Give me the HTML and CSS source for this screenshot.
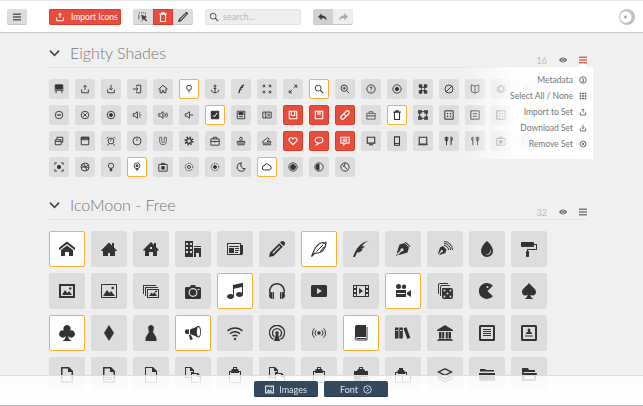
FILE: index.html
```html
<!DOCTYPE html>
<html lang="en">
<head>
  <meta charset="UTF-8">
  <meta name="viewport" content="width=device-width, initial-scale=1.0">
  <title>IcoMoon App</title>
  <link rel="stylesheet" href="styles.css">
</head>
<body>

<svg class="icon-defs" xmlns="http://www.w3.org/2000/svg">
  <!-- toolbar bits -->
  <symbol id="menu-bars" viewBox="0 0 8 8"><path d="M0 .5h8v1.500H0zM0 3.300h8v1.500H0zM0 6.100h8v1.500H0z" fill="currentColor" opacity=".85"/></symbol>
  <symbol id="undo-arrow" viewBox="0 0 16 16"><path d="M6 2L0 7.500 6 13V9.500c4 0 6.500 1.200 8 4.500 0-5-2.500-8.500-8-8.500z"/></symbol>
  <symbol id="chev" viewBox="0 0 12 8"><path d="M1 1.500l5 5 5-5" fill="none" stroke="currentColor" stroke-width="1.800"/></symbol>
  <symbol id="cursor" viewBox="0 0 12 12"><path d="M1 1h8v8" fill="none" stroke="currentColor" stroke-dasharray="1.500 1"/><path d="M1 3v6M3 11h1" fill="none" stroke="currentColor"/><path d="M3.500 3l7.500 3-3 1.200 3 3-1.200 1.200-3-3L5.800 11z" fill="currentColor"/></symbol>
  <symbol id="s-next" viewBox="0 0 12 12"><circle cx="6" cy="6" r="5"/><path d="M5 3.500L7.500 6 5 8.500" stroke-width="1.300"/></symbol>

  <!-- small line icons, 12 grid -->
  <symbol id="s-desk" viewBox="0 0 12 12"><path d="M1.500 1h9v5h-9z" fill="currentColor"/><path d="M.5 7.500h11M2.500 8v3M9.500 8v3"/></symbol>
  <symbol id="s-upload" viewBox="0 0 12 12"><path d="M6 7V1.500M4 3.500l2-2 2 2M2 6.500v4h8v-4"/></symbol>
  <symbol id="s-download" viewBox="0 0 12 12"><path d="M6 1v6M4 5l2 2 2-2M2 6.500v4h8v-4"/></symbol>
  <symbol id="s-login" viewBox="0 0 12 12"><path d="M5.500 3V1.500h5v9h-5V9M1 6h6M5 4l2 2-2 2"/></symbol>
  <symbol id="s-home" viewBox="0 0 12 12"><path d="M.5 6.500l5.500-5 5.500 5M2.500 5.500v5H5V8h2v2.500h2.500v-5"/></symbol>
  <symbol id="s-pin" viewBox="0 0 12 12"><circle cx="6" cy="4.500" r="3"/><path d="M5 8.500h2M5.500 10.500h1"/></symbol>
  <symbol id="s-anchor" viewBox="0 0 12 12"><circle cx="6" cy="2.500" r="1.200"/><path d="M6 4v6.500M1.500 7c0 2.500 2.500 3.500 4.500 3.500s4.500-1 4.500-3.500M4.500 5.500h3"/></symbol>
  <symbol id="s-feather" viewBox="0 0 12 12"><path d="M9.500 1C6.500 2.500 4.500 5.500 3.500 11" stroke-width="1.600"/><path d="M6 3.500l2.500 1M5 6l2 1"/></symbol>
  <symbol id="s-expand" viewBox="0 0 12 12"><path d="M1.500 4V1.500H4M8 1.500h2.500V4M10.500 8v2.500H8M4 10.500H1.500V8M2 2l2 2M10 2L8 4M10 10L8 8M2 10l2-2"/></symbol>
  <symbol id="s-diag" viewBox="0 0 12 12"><path d="M7 5l3-3M7.500 1.500h3v3M5 7l-3 3M4.500 10.500h-3v-3"/></symbol>
  <symbol id="s-search" viewBox="0 0 12 12"><circle cx="5" cy="5" r="3.500"/><path d="M7.500 7.500l3.500 3.500" stroke-width="1.400"/></symbol>
  <symbol id="s-zoom" viewBox="0 0 12 12"><circle cx="5" cy="5" r="3.800"/><path d="M7.500 7.500l3.500 3.500M3.200 5h3.600M5 3.200v3.600"/></symbol>
  <symbol id="s-help" viewBox="0 0 12 12"><circle cx="6" cy="6" r="5"/><path d="M4.700 4.800c0-1.700 2.600-1.700 2.600 0 0 1-1.300 1-1.300 2M6 8v1"/></symbol>
  <symbol id="s-target" viewBox="0 0 12 12"><circle cx="6" cy="6" r="5"/><circle cx="6" cy="6" r="2" fill="currentColor"/></symbol>
  <symbol id="s-command" viewBox="0 0 12 12"><path d="M4 4h4v4H4z"/><path d="M1.500 1h3v3h-3zM7.500 1h3v3h-3zM1.500 8h3v3h-3zM7.500 8h3v3h-3z" fill="currentColor"/></symbol>
  <symbol id="s-no" viewBox="0 0 12 12"><circle cx="6" cy="6" r="4.800"/><path d="M2.500 9.500l7-7" stroke-width="1.200"/></symbol>
  <symbol id="s-book" viewBox="0 0 12 12"><path d="M6 2.500L1.500 1v8L6 11l4.500-2V1zM6 2.500V11"/></symbol>
  <symbol id="s-gear" viewBox="0 0 12 12"><circle cx="6" cy="6" r="3"/><circle cx="6" cy="6" r="4.500" stroke-width="1.500" stroke-dasharray="1.500 1.500"/></symbol>
  <symbol id="s-minus" viewBox="0 0 12 12"><circle cx="6" cy="6" r="4.500"/><path d="M3.500 6h5" stroke-width="1.500"/></symbol>
  <symbol id="s-cross" viewBox="0 0 12 12"><circle cx="6" cy="6" r="4.500"/><path d="M4 4l4 4M8 4l-4 4"/></symbol>
  <symbol id="s-dot" viewBox="0 0 12 12"><circle cx="6" cy="6" r="4.500"/><circle cx="6" cy="6" r="1.800" fill="currentColor"/></symbol>
  <symbol id="s-vol1" viewBox="0 0 12 12"><path d="M1.500 4.500h2L6.500 2v8l-3-2.500h-2zM8.500 4l1.500-1M8.500 6H11M8.500 8l1.500 1"/></symbol>
  <symbol id="s-vol2" viewBox="0 0 12 12"><path d="M1 4.500h2L6 2v8L3 7.500H1z"/><path d="M8 4c1 1 1 3 0 4M10 3c1.500 2 1.500 4 0 6"/></symbol>
  <symbol id="s-vol3" viewBox="0 0 12 12"><path d="M1.500 4.500h2L6.500 2v8l-3-2.500h-2z"/><path d="M6.500 6H11"/></symbol>
  <symbol id="s-check" viewBox="0 0 12 12"><path d="M1.500 1.500h9v9h-9z" fill="currentColor"/><path d="M3.500 6.500l2 1.500 3-4.500" stroke="#fff" stroke-width="1.200"/></symbol>
  <symbol id="s-save" viewBox="0 0 12 12"><path d="M1.500 1.500h9v9h-9z"/><path d="M3.500 3h5v2.500h-5z" fill="currentColor"/><path d="M3.500 8h5"/></symbol>
  <symbol id="s-panel" viewBox="0 0 12 12"><path d="M1 2.500h10v7H1zM4.500 2.500v7"/><path d="M2.500 5H3M6.500 5h3M6.500 7h3"/></symbol>
  <symbol id="s-floppy" viewBox="0 0 12 12"><path d="M1.500 1.500h9v9h-9zM4 1.500v5h4v-5" stroke-width="1.300"/></symbol>
  <symbol id="s-floppy2" viewBox="0 0 12 12"><path d="M1.500 1.500h9v9h-9z" stroke-width="1.300"/><path d="M4 1.500h4v4H4z" fill="currentColor" opacity=".6"/></symbol>
  <symbol id="s-bandage" viewBox="0 0 12 12"><path d="M1.500 7.500L7.500 1.500a2 2 0 0 1 3 3l-6 6a2 2 0 0 1-3-3zM5 5l2 2" stroke-width="1.300"/></symbol>
  <symbol id="s-case" viewBox="0 0 12 12"><path d="M1 4h10v7H1zM4 4V2h4v2" stroke-width="1.200"/><path d="M1 7h10" stroke-width="1.500"/></symbol>
  <symbol id="s-trash" viewBox="0 0 12 12"><path d="M1.500 2.500h9M3 2.500v9h6v-9M4.500 2.500V1h3v1.500" stroke-width="1.300"/></symbol>
  <symbol id="s-blocks" viewBox="0 0 12 12"><path d="M2 2h8v8H2z"/><path d="M0 0h4v4H0zM8 0h4v4H8zM0 8h4v4H0zM8 8h4v4H8z" fill="currentColor" opacity=".75"/></symbol>
  <symbol id="s-dots" viewBox="0 0 12 12"><path d="M1 1h10v10H1z" stroke-width="1.200"/><path d="M3.500 3.500h1.500v1.500H3.500zM7 3.500h1.500v1.500H7zM3.500 7h1.500v1.500H3.500zM7 7h1.500v1.500H7z" fill="currentColor" stroke="none"/></symbol>
  <symbol id="s-lines" viewBox="0 0 12 12"><path d="M1 1h10v10H1z" stroke-width="1.200"/><path d="M3.500 4.500h5M3.500 7.500h5"/></symbol>
  <symbol id="s-layers" viewBox="0 0 12 12"><path d="M1.500 4.500h7v6h-7zM3.500 4.500v-3h7v6h-2M1.500 6.500h7"/></symbol>
  <symbol id="s-window" viewBox="0 0 12 12"><path d="M1.500 1.500h9v9h-9z"/><path d="M1.500 1.500h9v3h-9z" fill="currentColor" opacity=".8"/></symbol>
  <symbol id="s-alarm" viewBox="0 0 12 12"><circle cx="6" cy="6" r="3.500"/><path d="M1 3l2-2M11 3L9 1M3 9.500l-1 2M9 9.500l1 2M6 4v2"/></symbol>
  <symbol id="s-clock" viewBox="0 0 12 12"><circle cx="6" cy="6" r="4.800"/><path d="M6 3v3"/></symbol>
  <symbol id="s-magnet" viewBox="0 0 12 12"><path d="M2 1.500v5a4 4 0 0 0 8 0v-5h-2.500v5a1.500 1.500 0 0 1-3 0v-5z" stroke-width="1.200"/></symbol>
  <symbol id="s-cog" viewBox="0 0 12 12"><circle cx="6" cy="6" r="2.800" stroke-width="1.500"/><circle cx="6" cy="6" r="4.500" stroke-width="2" stroke-dasharray="1.800 1.730"/></symbol>
  <symbol id="s-kit" viewBox="0 0 12 12"><path d="M1 3.500h10v7.500H1zM4 3.500V1.500h4v2"/><path d="M1 6.500h10M6 6v2"/></symbol>
  <symbol id="s-stamp" viewBox="0 0 12 12"><path d="M4.500 6.500c1-1 .3-2.500 0-3.500a1.500 1.500 0 0 1 3 0c-.3 1-1 2.500 0 3.500M1.500 6.500h9v2h-9zM1.500 10.500h9"/></symbol>
  <symbol id="s-stamp2" viewBox="0 0 12 12"><path d="M1 6.500L7 2l2 2-3 2.500h4.500v2H1zM1 10.500h10"/></symbol>
  <symbol id="s-heart" viewBox="0 0 12 12"><path d="M6 10.500L1.500 6C-.2 3.500 3.500.5 6 3.500 8.500.5 12.200 3.500 10.500 6z" stroke-width="1.300"/></symbol>
  <symbol id="s-chat" viewBox="0 0 12 12"><path d="M6.500 1.500c-6 0-7 5.500-2 6.500L3 10.500 7 8.500c5.500-1 4.500-7-.5-7z" stroke-width="1.300"/></symbol>
  <symbol id="s-note" viewBox="0 0 12 12"><path d="M1 1.500h10v7H6.500l-2 2v-2H1z" stroke-width="1.300"/><path d="M3.500 3.500h5v3h-5z" fill="currentColor" opacity=".6"/></symbol>
  <symbol id="s-monitor" viewBox="0 0 12 12"><path d="M1.500 1.500h9v7h-9z" stroke-width="1.300"/><path d="M3.500 10.500h5" stroke-width="1.300"/></symbol>
  <symbol id="s-tablet" viewBox="0 0 12 12"><path d="M3 1h6v10H3z" stroke-width="1.300"/><path d="M3 9h6"/></symbol>
  <symbol id="s-screen" viewBox="0 0 12 12"><path d="M1.500 1.500h9v8h-9z" stroke-width="1.300"/><path d="M.5 10.500h11" stroke-width="1.300"/></symbol>
  <symbol id="s-fork" viewBox="0 0 12 12"><path d="M1.500 1v3.500a1 1 0 0 0 3 0V1M3 1v10M8.500 11V1c2 1 2 4.500 0 5" stroke-width="1.200"/></symbol>
  <symbol id="s-fork2" viewBox="0 0 12 12"><path d="M3.500 11V1c-2 1-2 4.500 0 5M7.500 1v3.500a1 1 0 0 0 3 0V1M9 1v10" stroke-width="1.200"/></symbol>
  <symbol id="s-focus" viewBox="0 0 12 12"><path d="M1 3.500V1h2.500M8.500 1H11v2.500M11 8.500V11H8.500M3.500 11H1V8.500"/><circle cx="6" cy="6" r="2" fill="currentColor"/></symbol>
  <symbol id="s-ball" viewBox="0 0 12 12"><circle cx="6" cy="6" r="4.800"/><path d="M2 3.500c3 3 5.500 3 8-.5M4 1.500c2 2.500 3.500 6 4 9M1.500 7.500C3 6 6.500 5 10.500 7"/></symbol>
  <symbol id="s-bulb" viewBox="0 0 12 12"><circle cx="6" cy="4.500" r="3.200"/><path d="M5 8.500h2v2H5z" fill="currentColor"/></symbol>
  <symbol id="s-bulb2" viewBox="0 0 12 12"><circle cx="6" cy="4.500" r="3.500"/><circle cx="6" cy="4.500" r="1.200" fill="currentColor"/><path d="M4.500 9h3M5.500 10.500h1"/></symbol>
  <symbol id="s-camera" viewBox="0 0 12 12"><path d="M1 3h10v8H1zM4 3V1.500h4V3"/><path d="M4.500 5.500h3v3h-3z" fill="currentColor"/></symbol>
  <symbol id="s-sun" viewBox="0 0 12 12"><circle cx="6" cy="6" r="1.800"/><circle cx="6" cy="6" r="4.500" stroke-dasharray="1.400 1"/></symbol>
  <symbol id="s-sun2" viewBox="0 0 12 12"><circle cx="6" cy="6" r="1.800" fill="currentColor"/><circle cx="6" cy="6" r="4.500" stroke-dasharray="1.400 1"/></symbol>
  <symbol id="s-moon" viewBox="0 0 12 12"><path d="M6.500 1A5 5 0 1 0 11 8 4.500 4.500 0 0 1 6.500 1z" stroke-width="1.200"/></symbol>
  <symbol id="s-cloud" viewBox="0 0 12 12"><path d="M3 9.500a2.500 2.500 0 0 1-.3-5 3 3 0 0 1 5.600-.8A3 3 0 0 1 9 9.500z" stroke-width="1.200"/></symbol>
  <symbol id="s-record" viewBox="0 0 12 12"><circle cx="6" cy="6" r="5"/><circle cx="6" cy="6" r="3" fill="currentColor"/></symbol>
  <symbol id="s-half" viewBox="0 0 12 12"><circle cx="6" cy="6" r="5"/><path d="M6 2.500a3.500 3.500 0 0 0 0 7z" fill="currentColor"/></symbol>
  <symbol id="s-slash" viewBox="0 0 12 12"><circle cx="6" cy="6" r="5"/><path d="M3 3.500l5.500 5M6 1.500l-1.500 4"/></symbol>
  <symbol id="s-grid" viewBox="0 0 12 12"><path d="M1 1h2.500v2.500H1zM4.800 1h2.500v2.500H4.800zM8.500 1H11v2.500H8.500zM1 4.800h2.500v2.500H1zM4.800 4.800h2.500v2.500H4.800zM8.500 4.800H11v2.500H8.500zM1 8.500h2.500V11H1zM4.800 8.500h2.500V11H4.800zM8.500 8.500H11V11H8.500z" fill="currentColor" stroke="none"/></symbol>
  <symbol id="s-info" viewBox="0 0 12 12"><circle cx="6" cy="6" r="5"/><path d="M4.500 4h2v4.500M4.500 8.500h3"/></symbol>
  <symbol id="s-eye" viewBox="0 0 12 12"><path d="M0 6c3-5 9-5 12 0-3 5-9 5-12 0z" fill="currentColor" stroke="none"/><circle cx="6" cy="6" r="2.600" fill="#f0f0f0" stroke="none"/><circle cx="6" cy="6" r="1.500" fill="currentColor" stroke="none"/></symbol>

  <!-- solid icons, 16 grid -->
  <symbol id="b-home" viewBox="0 0 16 16"><path d="M16 9.226l-8-6.210-8 6.210V6.694L8 .484l8 6.210zM14 9v6h-4v-4H6v4H2V9l6-4.500z"/></symbol>
  <symbol id="b-home2" viewBox="0 0 16 16"><path d="M16 9.500l-3-3V2h-2v2.500l-3-3-8 8v.5h2v5h5v-3h2v3h5v-5h2z"/></symbol>
  <symbol id="b-home3" viewBox="0 0 16 16"><path d="M8 1L0 9l1 1 1-1v6h4v-4h4v4h4V9l1 1 1-1-3-3V2h-2v2zM7 6h2v2H7z"/></symbol>
  <symbol id="b-office" viewBox="0 0 16 16"><path d="M0 16h8V0H0zM5 2h2v2H5zM5 6h2v2H5zM5 10h2v2H5zM1 2h2v2H1zM1 6h2v2H1zM1 10h2v2H1zM9 5h7v1H9zM9 16h2v-4h3v4h2V7H9z"/></symbol>
  <symbol id="b-news" viewBox="0 0 16 16"><path d="M14 4V2H0v11c0 .552.448 1 1 1h13.500c.828 0 1.500-.672 1.500-1.500V4zM13 13H1V3h12zM2 5h10v1H2zM8 7h4v1H8zM8 9h4v1H8zM8 11h3v1H8zM2 7h5v5H2z"/></symbol>
  <symbol id="b-pencil" viewBox="0 0 16 16"><path d="M13.500 0C14.881 0 16 1.119 16 2.500c0 .563-.186 1.082-.5 1.500l-1 1L11 1.500l1-1C12.418.186 12.937 0 13.500 0zM1 11.500L0 16l4.500-1 9.250-9.250-3.500-3.500zM11.181 5.681l-7 7-.862-.862 7-7z"/></symbol>
  <symbol id="b-quill" viewBox="0 0 16 16"><path d="M0 16c2-6 7.400-16 16-16-4 1-6.500 4-7 5.500 1 0 2-.2 2.700-.5-.7 1.500-2 2.600-3.700 3 .5.200 1.100.200 1.700 0C8.500 10.500 6.500 12 4 11.500L2 16z"/></symbol>
  <symbol id="b-quill2" viewBox="0 0 16 16"><path d="M.5 15.500l2.500-6C5 5 8.500 2 12 1.500l1 1 1.800-1.200c.4 2.200-.5 5.200-2.500 7.700-2 2.500-5 3.300-8.300 3z" fill="none" stroke="currentColor" stroke-width="1.200"/><path d="M5.500 10.500L12 4M9 11l4-5" fill="none" stroke="currentColor"/></symbol>
  <symbol id="b-pen" viewBox="0 0 16 16"><path d="M10.700.7l4.600 4.600-.8.800-4.600-4.600zM9.500 2l4.500 4.500-1.500 5L4 14l-.6-.6 3.200-3.200a1.500 1.500 0 1 0-1-1L2.400 12.400 1.800 11.800 4.500 3.500zM1 14.500L2.500 13l.5.500L1.500 15z"/></symbol>
  <symbol id="b-blog" viewBox="0 0 16 16"><path d="M6 5l3.500 3.500-1 3.500-6 2-.4-.4 2.300-2.300a1.200 1.200 0 1 0-.8-.8L1.400 12.900 1 12.500l2-6z"/><path d="M7 2.500A6.500 6.500 0 0 1 13.500 9M7 .5A8.500 8.500 0 0 1 15.500 9M7 4.500A4.500 4.500 0 0 1 11.500 9" fill="none" stroke="currentColor"/></symbol>
  <symbol id="b-drop" viewBox="0 0 16 16"><path d="M13.510 7.393C12.483 4.527 10.305 1.953 8 0 5.695 1.953 3.518 4.527 2.490 7.393c-.635 1.772-.698 3.696.197 5.397C3.716 14.745 5.791 16 8 16s4.284-1.255 5.313-3.210c.895-1.701.832-3.624.197-5.397zM11.600 11.800c-.7 1.300-2.100 2.200-3.600 2.200-.5 0-.9-.1-1.300-.2 1.700 0 3.300-1 4.100-2.500.6-1.100.6-2.200.4-3.300.6 1.300.9 2.700.4 3.800z"/></symbol>
  <symbol id="b-paint" viewBox="0 0 16 16"><path d="M16 9V3h-3V2c0-.55-.45-1-1-1H1c-.55 0-1 .45-1 1v3c0 .55.45 1 1 1h11c.55 0 1-.45 1-1V4h2v4H6v2h-.5c-.275 0-.5.225-.5.500v5c0 .275.225.5.5.5h2c.275 0 .5-.225.5-.5v-5c0-.275-.225-.5-.5-.5H7V9z"/></symbol>
  <symbol id="b-image" viewBox="0 0 16 16"><path d="M0 1h16v14H0zM2 3v10h12V3zM13 12H3l3-5 2.500 3L10 8zM12.500 5.500a1.200 1.200 0 1 1-2.400 0 1.200 1.200 0 0 1 2.400 0z"/></symbol>
  <symbol id="b-image2" viewBox="0 0 16 16"><path d="M0 1h16v14H0zM1 2v12h14V2zM14 13H2l4-6 2.500 3L10 8zM13 5a1.300 1.300 0 1 1-2.600 0A1.300 1.300 0 0 1 13 5z"/></symbol>
  <symbol id="b-images" viewBox="0 0 16 16"><path d="M0 2h13v1H1v8H0zM2 4h13v1H3v8H2zM4 6h12v9H4zM5 7v7h10V7zM14 13H6l2.500-3.500L10 11l1.500-2zM14 8.500a1 1 0 1 1-2 0 1 1 0 0 1 2 0z"/></symbol>
  <symbol id="b-camera" viewBox="0 0 16 16"><path d="M4.750 9.500a3.250 3.250 0 1 0 6.500 0 3.250 3.250 0 1 0-6.500 0zM14.500 4H11c-.25-1-.5-2-1.500-2h-3C5.500 2 5.250 3 5 4H1.500C.675 4 0 4.675 0 5.500v9c0 .825.675 1.500 1.500 1.500h13c.825 0 1.500-.675 1.500-1.500v-9c0-.825-.675-1.500-1.500-1.500zM8 13.938c-2.451 0-4.438-1.987-4.438-4.438S5.549 5.062 8 5.062s4.438 1.987 4.438 4.438S10.451 13.938 8 13.938zM14.500 7h-2V6h2z"/></symbol>
  <symbol id="b-music" viewBox="0 0 16 16"><path d="M15 0h1v11.500c0 1.381-1.567 2.500-3.500 2.500S9 12.881 9 11.500 10.567 9 12.500 9c.979 0 1.865.287 2.500.751V4l-8 1.778V13.500C7 14.881 5.433 16 3.500 16S0 14.881 0 13.500 1.567 11 3.500 11c.979 0 1.865.287 2.500.751V2z"/></symbol>
  <symbol id="b-phones" viewBox="0 0 16 16"><path d="M4.500 9h-1v7h1c.275 0 .5-.225.5-.5v-6c0-.275-.225-.5-.5-.5zM11.500 9c-.275 0-.5.225-.5.500v6c0 .275.225.5.5.5h1V9zM16 8c0-4.418-3.582-8-8-8S0 3.582 0 8c0 .96.169 1.880.479 2.732C.175 11.251 0 11.855 0 12.500c0 1.763 1.304 3.222 3 3.464V9.036c-.499.071-.963.248-1.371.506C1.545 9.125 1.500 8.693 1.500 8.250 1.500 4.660 4.410 1.500 8 1.500s6.500 3.160 6.500 6.750c0 .442-.044.874-.128 1.292-.408-.259-.873-.435-1.372-.507v6.929c1.696-.243 3-1.701 3-3.464 0-.645-.175-1.249-.479-1.768C15.831 9.879 16 8.959 16 8z"/></symbol>
  <symbol id="b-play" viewBox="0 0 16 16"><path d="M1.500 2h13A1.500 1.500 0 0 1 16 3.500v9a1.500 1.500 0 0 1-1.500 1.500h-13A1.500 1.500 0 0 1 0 12.500v-9A1.500 1.500 0 0 1 1.500 2zM6 5v6l5-3z"/></symbol>
  <symbol id="b-film" viewBox="0 0 16 16"><path d="M0 2v12h16V2zM3 13H1v-2h2zM3 9H1V7h2zM3 5H1V3h2zM12 13H4V3h8zM15 13h-2v-2h2zM15 9h-2V7h2zM15 5h-2V3h2zM6 5v6l4-3z"/></symbol>
  <symbol id="b-video" viewBox="0 0 16 16"><path d="M3.500 1a2.500 2.500 0 1 1 0 5 2.500 2.500 0 0 1 0-5zM9 1.500a2.200 2.200 0 1 1 0 4.400 2.200 2.200 0 0 1 0-4.400zM1 7h10v7H1zM2 10v1h8v-1zM12 9.500L16 7v7l-4-2.500z"/></symbol>
  <symbol id="b-dice" viewBox="0 0 16 16"><path d="M5.500 5H14a2 2 0 0 1 2 2v7a2 2 0 0 1-2 2H7a2 2 0 0 1-2-2V6zM7.500 6.500a1 1 0 1 0 0 2 1 1 0 0 0 0-2zM13.500 6.500a1 1 0 1 0 0 2 1 1 0 0 0 0-2zM10.500 9.500a1 1 0 1 0 0 2 1 1 0 0 0 0-2zM7.500 12.500a1 1 0 1 0 0 2 1 1 0 0 0 0-2zM13.500 12.500a1 1 0 1 0 0 2 1 1 0 0 0 0-2z"/><path d="M4 13H3V4a2 2 0 0 1 2-2h8v1H5a1 1 0 0 0-1 1zM2 11H1V2a2 2 0 0 1 2-2h8v1H3a1 1 0 0 0-1 1z"/></symbol>
  <symbol id="b-pacman" viewBox="0 0 16 16"><path d="M13.900 2.800A8 8 0 1 0 13.900 13.200L8.500 8zM8.500 3a1 1 0 1 1 0 2 1 1 0 0 1 0-2z"/></symbol>
  <symbol id="b-spade" viewBox="0 0 16 16"><path d="M8 0C5 4 1 5.500 1 9c0 2 1.500 3.500 3.200 3.500 1 0 1.900-.4 2.400-1.100C6.500 13.500 5.500 15 4 15.500V16h8v-.5c-1.500-.5-2.500-2-2.600-4.100.5.700 1.400 1.100 2.400 1.100 1.700 0 3.200-1.500 3.200-3.500C15 5.500 11 4 8 0z"/></symbol>
  <symbol id="b-club" viewBox="0 0 16 16"><path d="M8 0a3.600 3.600 0 0 0-3 5.600 3.600 3.600 0 1 0 1.700 5.400c-.1 2-1 3.500-2.700 4.500V16h8v-.5c-1.700-1-2.600-2.500-2.700-4.500A3.600 3.600 0 1 0 11 5.600 3.600 3.600 0 0 0 8 0z"/></symbol>
  <symbol id="b-diamond" viewBox="0 0 16 16"><path d="M8 0l5 8-5 8-5-8z"/></symbol>
  <symbol id="b-pawn" viewBox="0 0 16 16"><path d="M8 0a2.800 2.800 0 0 1 2 4.800h1v1H9.800c.2 3 3.700 5 3.700 8.200v2h-11v-2c0-3.200 3.500-5.200 3.700-8.200H5v-1h1A2.800 2.800 0 0 1 8 0z"/></symbol>
  <symbol id="b-horn" viewBox="0 0 16 16"><path d="M13.900 1h-1.200S9.600 3.300 5.200 4.200C5.100 4.900 5 5.700 5 6.700s.1 1.800.2 2.500c4.400.9 7.500 3.200 7.500 3.200h1.200c1.200 0 2.100-2.600 2.100-5.700S15.100 1 13.900 1zM13.500 11.500c-.8 0-1.700-2.100-1.700-4.800s.9-4.800 1.700-4.800 1.700 2.100 1.700 4.800-.9 4.800-1.700 4.800zM3.900 6.700c0-.8.100-1.600.2-2.300-.7.100-1.400.1-2.200.1H.9L0 6v1.400l.9 1.500h1c.8 0 1.500.1 2.200.2-.1-.8-.2-1.600-.2-2.400zM5.800 10l-2-.4 1.300 5c.1.300.3.400.6.300l1.800-.7c.3-.1.400-.4.200-.6z"/></symbol>
  <symbol id="b-wifi" viewBox="0 0 16 16"><path d="M.5 6a11 11 0 0 1 15 0M3 8.800a7.300 7.300 0 0 1 10 0M5.500 11.300a3.700 3.700 0 0 1 5 0" fill="none" stroke="currentColor" stroke-width="1.400"/><circle cx="8" cy="14" r="1.200"/></symbol>
  <symbol id="b-cast" viewBox="0 0 16 16"><path d="M4.500 14.400a7.500 7.500 0 1 1 7 0M5.500 11.800a4.500 4.500 0 1 1 5 0" fill="none" stroke="currentColor" stroke-width="1.300"/><circle cx="8" cy="8" r="1.800"/><path d="M7 9h2l2 7H5z"/></symbol>
  <symbol id="b-radio" viewBox="0 0 16 16"><circle cx="8" cy="8" r="1.800"/><path d="M5.200 5.200a4 4 0 0 0 0 5.600M10.800 5.200a4 4 0 0 1 0 5.600M3.400 3.400a6.500 6.500 0 0 0 0 9.200M12.600 3.400a6.500 6.500 0 0 1 0 9.200" fill="none" stroke="currentColor"/></symbol>
  <symbol id="b-book" viewBox="0 0 16 16"><path d="M2 2a2 2 0 0 1 2-2h9v12H4a2 2 0 0 0-2 1.500z"/><path d="M14 2v13H3.500a1.500 1.500 0 0 1 0-3" fill="none" stroke="currentColor"/><path d="M3.500 13.500H13" fill="none" stroke="currentColor"/></symbol>
  <symbol id="b-books" viewBox="0 0 16 16"><path d="M0 2.500h3.500v11H0zM4.300 2.500h3.500v11H4.300zM8.500 3.300l3-1 3.800 10.500-3 1.200zM.7 5h2v1h-2zM5 5h2v1H5z"/></symbol>
  <symbol id="b-library" viewBox="0 0 16 16"><path d="M8 0l8 5v1H0V5zM1 14h14v1H1zM0 15.200h16V16H0zM2 7h2.500v6.500H2zM5.200 7h2v6.500h-2zM8.800 7h2v6.500h-2zM11.500 7H14v6.500h-2.500z"/></symbol>
  <symbol id="b-doc" viewBox="0 0 16 16"><path d="M1.500 0h13A1.500 1.500 0 0 1 16 1.500v13a1.500 1.500 0 0 1-1.500 1.500h-13A1.500 1.500 0 0 1 0 14.500v-13A1.500 1.500 0 0 1 1.500 0zM2 2v12h12V2zM4 4h8v1H4zM4 6h8v1H4zM4 8h8v1H4zM4 10h8v1H4z"/></symbol>
  <symbol id="b-profile" viewBox="0 0 16 16"><path d="M1.500 0h13A1.500 1.500 0 0 1 16 1.500v13a1.500 1.500 0 0 1-1.500 1.500h-13A1.500 1.500 0 0 1 0 14.500v-13A1.500 1.500 0 0 1 1.500 0zM2 2v12h12V2zM8 3.500a1.500 1.500 0 0 1 1 2.600v.7c1 .3 2 .7 2 1.700v.5H5v-.5c0-1 1-1.400 2-1.700v-.7a1.500 1.500 0 0 1 1-2.600zM4 10.500h8v1H4z"/></symbol>
  <symbol id="b-file" viewBox="0 0 16 16"><path d="M2 0h8l4 4v12H2zM3.500 1.500v13h9V5H9V1.500z"/></symbol>
  <symbol id="b-file2" viewBox="0 0 16 16"><path d="M2 0h8l4 4v12H2zM3.500 1.500v13h9V5H9V1.500zM5 8h6v1H5zM5 10h6v1H5zM5 12h6v1H5z"/></symbol>
  <symbol id="b-file3" viewBox="0 0 16 16"><path d="M2 0h8l4 4v12H2zM3 1v14h10V5H9V1z"/></symbol>
  <symbol id="b-copy" viewBox="0 0 16 16"><path d="M0 0h6l3 3v3h4l3 3v7H6v-5H0zM1 1v9h5V5h2V4H5V1zM7 7v8h8V10h-3V7z"/></symbol>
  <symbol id="b-clip" viewBox="0 0 16 16"><path d="M5 2h1V0h4v2h1l1 2h2v12H2V4h2zM3 5v10h10V5h-1v1H4V5zM7 1v1h2V1z"/></symbol>
  <symbol id="b-clip2" viewBox="0 0 16 16"><path d="M0 5h2l1-2h1V1h4v2h1l1 2h2v3h-1V6h-1v1H3V6H1v9h5v1H0z"/><path d="M7 8h9v8H7zM8 9v6h7V9z"/></symbol>
  <symbol id="b-clip3" viewBox="0 0 16 16"><path d="M1 4h3l1-2h1V0h4v2h1l1 2h3v6H8v6H1zM7 1v1h2V1z"/><path d="M9 11h7v5H9z" opacity=".6"/></symbol>
  <symbol id="b-stack" viewBox="0 0 16 16"><path d="M8 1l8 4-8 4-8-4zM8 2.500L3 5l5 2.500L13 5zM1.500 8L8 11.200 14.500 8 16 8.800l-8 4-8-4zM1.500 11L8 14.200 14.500 11l1.500.8-8 4-8-4z"/></symbol>
  <symbol id="b-folder" viewBox="0 0 16 16"><path d="M1 2h5l1 1h8v1.500H1zM0 6h16v8H0z"/></symbol>
  <symbol id="b-open" viewBox="0 0 16 16"><path d="M1 1h6l1 2h6v2H3L1 12zM3 6h13l-1.500 8H0zM4 8l-1 4h10l.5-4z"/></symbol>
</svg>

<header class="topbar">
  <button class="tool"><svg class="ico-bars"><use href="#menu-bars"/></svg></button>
  <button class="tool tool-red import-btn">
    <svg class="ico-sm line"><use href="#s-upload"/></svg>
    <span>Import Icons</span>
  </button>
  <div class="tool-group">
    <button class="tool"><svg class="ico-sm"><use href="#cursor"/></svg></button>
    <button class="tool tool-red"><svg class="ico-sm line"><use href="#s-trash"/></svg></button>
    <button class="tool"><svg class="ico-sm solid"><use href="#b-pencil"/></svg></button>
  </div>
  <label class="search">
    <svg class="ico-sm line"><use href="#s-search"/></svg>
    <span>search...</span>
  </label>
  <div class="tool-group">
    <button class="tool tool-dark"><svg class="ico-sm solid"><use href="#undo-arrow"/></svg></button>
    <button class="tool tool-faded"><svg class="ico-sm solid flip"><use href="#undo-arrow"/></svg></button>
  </div>
  <svg class="logo" viewBox="0 0 16 16">
    <circle cx="8" cy="8" r="8" fill="#c2c2c2"/>
    <circle cx="6.800" cy="8" r="5.800" fill="#fff"/>
    <circle cx="6.500" cy="8" r="1.500" fill="#aaa"/>
  </svg>
</header>

<main class="sets">

  <section class="icon-set">
    <div class="set-head">
      <svg class="chevron"><use href="#chev"/></svg>
      <h2>Eighty Shades</h2>
      <div class="set-meta">
        <span class="count">16</span>
        <svg class="meta-ico"><use href="#s-eye"/></svg>
        <svg class="meta-ico red"><use href="#menu-bars"/></svg>
      </div>
      <ul class="set-menu">
        <li>Metadata <svg class="line"><use href="#s-info"/></svg></li>
        <li>Select All / None <svg class="line"><use href="#s-grid"/></svg></li>
        <li>Import to Set <svg class="line"><use href="#s-upload"/></svg></li>
        <li>Download Set <svg class="line"><use href="#s-download"/></svg></li>
        <li>Remove Set <svg class="line"><use href="#s-cross"/></svg></li>
      </ul>
    </div>
    <div class="grid grid-small">
      <div class="cell"><svg><use href="#s-desk"/></svg></div>
      <div class="cell"><svg><use href="#s-upload"/></svg></div>
      <div class="cell"><svg><use href="#s-download"/></svg></div>
      <div class="cell"><svg><use href="#s-login"/></svg></div>
      <div class="cell"><svg><use href="#s-home"/></svg></div>
      <div class="cell on"><svg><use href="#s-pin"/></svg></div>
      <div class="cell"><svg><use href="#s-anchor"/></svg></div>
      <div class="cell"><svg><use href="#s-feather"/></svg></div>
      <div class="cell"><svg><use href="#s-expand"/></svg></div>
      <div class="cell"><svg><use href="#s-diag"/></svg></div>
      <div class="cell on"><svg><use href="#s-search"/></svg></div>
      <div class="cell"><svg><use href="#s-zoom"/></svg></div>
      <div class="cell"><svg><use href="#s-help"/></svg></div>
      <div class="cell"><svg><use href="#s-target"/></svg></div>
      <div class="cell"><svg><use href="#s-command"/></svg></div>
      <div class="cell"><svg><use href="#s-no"/></svg></div>
      <div class="cell"><svg><use href="#s-book"/></svg></div>
      <div class="cell"><svg><use href="#s-gear"/></svg></div>
      <div class="cell"><svg><use href="#s-dot"/></svg></div>
      <div class="cell"><svg><use href="#s-dot"/></svg></div>

      <div class="cell"><svg><use href="#s-minus"/></svg></div>
      <div class="cell"><svg><use href="#s-cross"/></svg></div>
      <div class="cell"><svg><use href="#s-dot"/></svg></div>
      <div class="cell"><svg><use href="#s-vol1"/></svg></div>
      <div class="cell"><svg><use href="#s-vol2"/></svg></div>
      <div class="cell"><svg><use href="#s-vol3"/></svg></div>
      <div class="cell on"><svg><use href="#s-check"/></svg></div>
      <div class="cell"><svg><use href="#s-save"/></svg></div>
      <div class="cell"><svg><use href="#s-panel"/></svg></div>
      <div class="cell del"><svg><use href="#s-floppy"/></svg></div>
      <div class="cell del"><svg><use href="#s-floppy2"/></svg></div>
      <div class="cell del"><svg><use href="#s-bandage"/></svg></div>
      <div class="cell muted"><svg><use href="#s-case"/></svg></div>
      <div class="cell on"><svg><use href="#s-trash"/></svg></div>
      <div class="cell"><svg><use href="#s-blocks"/></svg></div>
      <div class="cell"><svg><use href="#s-dots"/></svg></div>
      <div class="cell"><svg><use href="#s-lines"/></svg></div>
      <div class="cell"><svg><use href="#s-dots"/></svg></div>
      <div class="cell on"><svg><use href="#s-upload"/></svg></div>
      <div class="cell"><svg><use href="#s-save"/></svg></div>

      <div class="cell"><svg><use href="#s-layers"/></svg></div>
      <div class="cell"><svg><use href="#s-window"/></svg></div>
      <div class="cell"><svg><use href="#s-alarm"/></svg></div>
      <div class="cell"><svg><use href="#s-clock"/></svg></div>
      <div class="cell muted"><svg><use href="#s-magnet"/></svg></div>
      <div class="cell"><svg><use href="#s-cog"/></svg></div>
      <div class="cell"><svg><use href="#s-kit"/></svg></div>
      <div class="cell"><svg><use href="#s-stamp"/></svg></div>
      <div class="cell"><svg><use href="#s-stamp2"/></svg></div>
      <div class="cell del"><svg><use href="#s-heart"/></svg></div>
      <div class="cell del"><svg><use href="#s-chat"/></svg></div>
      <div class="cell del"><svg><use href="#s-note"/></svg></div>
      <div class="cell"><svg><use href="#s-monitor"/></svg></div>
      <div class="cell"><svg><use href="#s-tablet"/></svg></div>
      <div class="cell"><svg><use href="#s-screen"/></svg></div>
      <div class="cell"><svg><use href="#s-fork"/></svg></div>
      <div class="cell"><svg><use href="#s-fork2"/></svg></div>
      <div class="cell"><svg><use href="#s-camera"/></svg></div>
      <div class="cell"><svg><use href="#s-lines"/></svg></div>
      <div class="cell"><svg><use href="#s-layers"/></svg></div>

      <div class="cell"><svg><use href="#s-focus"/></svg></div>
      <div class="cell"><svg><use href="#s-ball"/></svg></div>
      <div class="cell"><svg><use href="#s-bulb"/></svg></div>
      <div class="cell on"><svg><use href="#s-bulb2"/></svg></div>
      <div class="cell"><svg><use href="#s-camera"/></svg></div>
      <div class="cell"><svg><use href="#s-sun"/></svg></div>
      <div class="cell"><svg><use href="#s-sun2"/></svg></div>
      <div class="cell"><svg><use href="#s-moon"/></svg></div>
      <div class="cell on"><svg><use href="#s-cloud"/></svg></div>
      <div class="cell"><svg><use href="#s-record"/></svg></div>
      <div class="cell"><svg><use href="#s-half"/></svg></div>
      <div class="cell"><svg><use href="#s-slash"/></svg></div>
    </div>
  </section>

  <section class="icon-set">
    <div class="set-head">
      <svg class="chevron"><use href="#chev"/></svg>
      <h2>IcoMoon - Free</h2>
      <div class="set-meta">
        <span class="count">32</span>
        <svg class="meta-ico"><use href="#s-eye"/></svg>
        <svg class="meta-ico"><use href="#menu-bars"/></svg>
      </div>
    </div>
    <div class="grid grid-big">
      <div class="cell on"><svg><use href="#b-home"/></svg></div>
      <div class="cell"><svg><use href="#b-home2"/></svg></div>
      <div class="cell"><svg><use href="#b-home3"/></svg></div>
      <div class="cell"><svg><use href="#b-office"/></svg></div>
      <div class="cell"><svg><use href="#b-news"/></svg></div>
      <div class="cell"><svg><use href="#b-pencil"/></svg></div>
      <div class="cell on"><svg><use href="#b-quill2"/></svg></div>
      <div class="cell"><svg><use href="#b-quill"/></svg></div>
      <div class="cell"><svg><use href="#b-pen"/></svg></div>
      <div class="cell"><svg><use href="#b-blog"/></svg></div>
      <div class="cell"><svg><use href="#b-drop"/></svg></div>
      <div class="cell"><svg><use href="#b-paint"/></svg></div>

      <div class="cell"><svg><use href="#b-image"/></svg></div>
      <div class="cell"><svg><use href="#b-image2"/></svg></div>
      <div class="cell"><svg><use href="#b-images"/></svg></div>
      <div class="cell"><svg><use href="#b-camera"/></svg></div>
      <div class="cell on"><svg><use href="#b-music"/></svg></div>
      <div class="cell"><svg><use href="#b-phones"/></svg></div>
      <div class="cell"><svg><use href="#b-play"/></svg></div>
      <div class="cell"><svg><use href="#b-film"/></svg></div>
      <div class="cell on"><svg><use href="#b-video"/></svg></div>
      <div class="cell"><svg><use href="#b-dice"/></svg></div>
      <div class="cell"><svg><use href="#b-pacman"/></svg></div>
      <div class="cell"><svg><use href="#b-spade"/></svg></div>

      <div class="cell on"><svg><use href="#b-club"/></svg></div>
      <div class="cell"><svg><use href="#b-diamond"/></svg></div>
      <div class="cell"><svg><use href="#b-pawn"/></svg></div>
      <div class="cell on"><svg><use href="#b-horn"/></svg></div>
      <div class="cell"><svg><use href="#b-wifi"/></svg></div>
      <div class="cell"><svg><use href="#b-cast"/></svg></div>
      <div class="cell"><svg><use href="#b-radio"/></svg></div>
      <div class="cell on"><svg><use href="#b-book"/></svg></div>
      <div class="cell"><svg><use href="#b-books"/></svg></div>
      <div class="cell"><svg><use href="#b-library"/></svg></div>
      <div class="cell"><svg><use href="#b-doc"/></svg></div>
      <div class="cell"><svg><use href="#b-profile"/></svg></div>

      <div class="cell"><svg><use href="#b-file"/></svg></div>
      <div class="cell"><svg><use href="#b-file2"/></svg></div>
      <div class="cell"><svg><use href="#b-file3"/></svg></div>
      <div class="cell"><svg><use href="#b-copy"/></svg></div>
      <div class="cell"><svg><use href="#b-clip"/></svg></div>
      <div class="cell"><svg><use href="#b-copy"/></svg></div>
      <div class="cell"><svg><use href="#b-clip"/></svg></div>
      <div class="cell"><svg><use href="#b-clip3"/></svg></div>
      <div class="cell"><svg><use href="#b-clip2"/></svg></div>
      <div class="cell"><svg><use href="#b-stack"/></svg></div>
      <div class="cell"><svg><use href="#b-folder"/></svg></div>
      <div class="cell"><svg><use href="#b-open"/></svg></div>
    </div>
  </section>

</main>

<footer class="bottombar">
  <button class="dark-btn"><svg class="solid"><use href="#b-image"/></svg> Images</button>
  <button class="dark-btn">Font <svg class="line"><use href="#s-next"/></svg></button>
</footer>

</body>
</html>
```

FILE: styles.css
```css
html, body {
  height: 100%;
}
body {
  margin: 0;
  overflow: hidden;
  background: #f0f0f0;
  color: #333;
  font-family: Lato, "Open Sans", sans-serif;
  font-size: 10px;
}
button {
  font: inherit;
  border: 0;
  padding: 0;
  margin: 0;
}
.icon-defs {
  position: absolute;
  width: 0;
  height: 0;
}

/* top bar */
.topbar {
  display: flex;
  align-items: center;
  box-sizing: border-box;
  height: 32px;
  padding: 0 8px 0 7px;
  background: #fff;
  border-top: 1px solid #e8e8e8;
  box-shadow: 0 1px 1px #ccc;
}
.tool {
  display: flex;
  align-items: center;
  justify-content: center;
  width: 20px;
  height: 16px;
  color: #444;
  background: #ddd;
  border-radius: 2px;
  box-shadow: inset 0 -1px 0 #c8c8c8;
}
.tool-red {
  color: #fff;
  background: #e74c3c;
  box-shadow: inset 0 0 0 1px #dc3a2a;
}
.import-btn {
  justify-content: flex-start;
  gap: 6px;
  width: 72px;
  margin: 0 12px 0 22px;
  padding-left: 6px;
  box-sizing: border-box;
  font-size: 8.500px;
}
.tool-group {
  display: flex;
}
.tool-group .tool {
  border-radius: 0;
}
.tool-group .tool:first-child {
  border-radius: 2px 0 0 2px;
}
.tool-group .tool:last-child {
  border-radius: 0 2px 2px 0;
}
.tool-dark {
  background: #d2d2d2;
}
.tool-faded {
  color: #aaa;
  background: #eee;
}
.ico-sm {
  width: 10px;
  height: 10px;
}
.ico-bars {
  width: 8px;
  height: 8px;
}
.flip {
  transform: scaleX(-1);
}
.line {
  fill: none;
  stroke: currentColor;
  stroke-width: 1.200;
}
.solid {
  fill: currentColor;
  fill-rule: evenodd;
}
.search {
  display: flex;
  align-items: center;
  gap: 4px;
  box-sizing: border-box;
  width: 96px;
  height: 16px;
  margin: 0 12px;
  padding-left: 3px;
  color: #bbb;
  font-size: 9px;
  background: #eee;
  border: 1px solid #e4e4e4;
  border-radius: 2px;
}
.search svg {
  color: #555;
}
.logo {
  width: 16px;
  height: 16px;
  margin-left: auto;
}

/* icon sets */
.sets {
  box-sizing: border-box;
  height: 374px;
  padding: 11px 56px 0 49px;
  overflow: hidden;
}
.icon-set + .icon-set {
  margin-top: 18px;
}
.set-head {
  position: relative;
  display: flex;
  height: 24px;
  border-bottom: 1px solid #e4e4e4;
}
.chevron {
  width: 11px;
  height: 8px;
  margin: 6px 10px 0 0;
  color: #444;
}
.set-head h2 {
  margin: 0;
  height: 20px;
  line-height: 20px;
  font-size: 16px;
  font-weight: 300;
  color: #777;
}
.set-meta {
  display: flex;
  align-items: center;
  gap: 12px;
  align-self: flex-end;
  height: 8px;
  margin: 0 0 3px auto;
}
.count {
  color: #bbb;
  font-size: 9px;
}
.meta-ico {
  width: 8px;
  height: 8px;
  color: #666;
}
.meta-ico.red {
  color: #e74c3c;
}

/* dropdown on a set */
.set-menu {
  position: absolute;
  top: 24px;
  right: -6px;
  width: 133px;
  margin: 0;
  padding: 5px 6px 7px 0;
  box-sizing: border-box;
  list-style: none;
  color: #777;
  font-size: 8.500px;
  background: linear-gradient(to right, rgba(255,255,255,0), rgba(255,255,255,.9) 40%, rgba(255,255,255,.97) 62%, #fff);
}
.set-menu::before {
  content: "";
  position: absolute;
  top: -4px;
  right: 6px;
  border: 4px solid transparent;
  border-top: 0;
  border-bottom-color: #fff;
}
.set-menu li {
  display: flex;
  align-items: center;
  justify-content: flex-end;
  gap: 6px;
  height: 16px;
}
.set-menu svg {
  width: 8px;
  height: 8px;
  color: #555;
}

/* grids */
.grid {
  display: grid;
  margin-top: 11px;
}
.grid-small {
  grid-template-columns: repeat(20, 20px);
  grid-auto-rows: 20px;
  gap: 6px;
}
.grid-big {
  grid-template-columns: repeat(12, 36px);
  grid-auto-rows: 36px;
  gap: 6px;
}
.cell {
  display: flex;
  align-items: center;
  justify-content: center;
  box-sizing: border-box;
  background: #ddd;
  border-radius: 2px;
  color: #333;
}
.cell.on {
  background: #fff;
  border: 1px solid #fbb034;
}
.cell.del {
  color: #fff;
  background: #e74c3c;
  border: 1px solid #dd3d2d;
}
.cell.muted {
  color: #666;
}
.grid-small svg {
  width: 10px;
  height: 10px;
  fill: none;
  stroke: currentColor;
  stroke-width: 1.100;
}
.grid-big svg {
  width: 16px;
  height: 16px;
  fill: currentColor;
  fill-rule: evenodd;
}

/* bottom bar */
.bottombar {
  position: fixed;
  left: 0;
  right: 0;
  bottom: 0;
  display: flex;
  justify-content: center;
  gap: 6px;
  box-sizing: border-box;
  height: 31px;
  padding: 5px 1px 0 0;
  background: linear-gradient(rgba(255,255,255,.8), rgba(255,255,255,.98) 60%, #fff);
  border-top: 1px solid #ddd;
  border-bottom: 1px solid #bbb;
}
.dark-btn {
  display: flex;
  align-items: center;
  justify-content: center;
  gap: 5px;
  width: 64px;
  height: 16px;
  font-size: 9px;
  color: #dde3e8;
  background: #34495e;
  border-radius: 2px;
  box-shadow: inset 0 -1px 0 #253544;
}
.dark-btn svg {
  width: 9px;
  height: 9px;
}
```
